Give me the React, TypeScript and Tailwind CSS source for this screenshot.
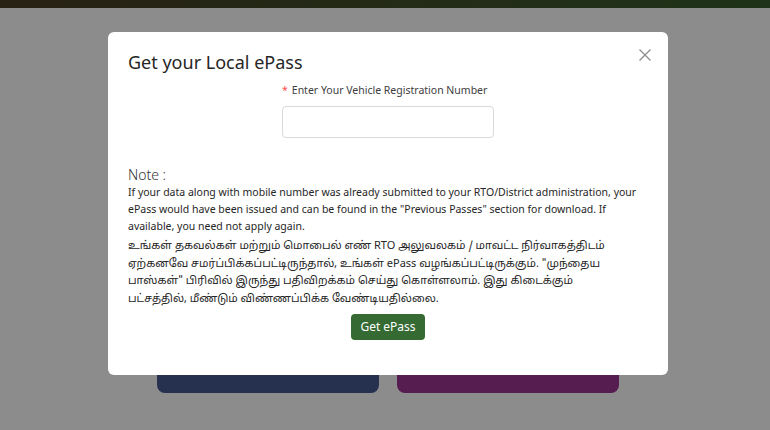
import React from "react";

const font = { fontFamily: '"Noto Sans", "Open Sans", Arial, sans-serif' };

export default function App() {
  return (
    <div className="relative w-full h-[430px] overflow-hidden bg-[#8c8c8c]" style={font}>
      {/* page behind the dimmed overlay */}
      <div className="h-[8px] bg-gradient-to-r from-[#272114] to-[#1e3319]" />
      <div className="flex justify-center gap-[18px] pt-[282px] pl-[6px]">
        <div className="w-[222px] h-[103px] rounded-lg bg-[#26304f]" />
        <div className="w-[222px] h-[103px] rounded-lg bg-[#561e50]" />
      </div>

      {/* modal */}
      <div className="absolute left-[108px] top-[32px] w-[560px] h-[343px] rounded-md bg-white px-5 pt-[16px] text-[#262626]">
        <div className="flex items-start justify-between">
          <h2 className="text-[18px] leading-[28px] text-[#262626]">Get your Local ePass</h2>
          <button className="mt-[0px] mr-[-4px] text-[#8c8c8c]">
            <svg width="14" height="14" viewBox="0 0 14 14" fill="none" stroke="currentColor" strokeWidth="1.3">
              <path d="M1.5 1.5l11 11M12.5 1.5l-11 11" />
            </svg>
          </button>
        </div>

        <div className="mt-[6px] flex justify-center">
          <div className="w-[212px]">
            <label className="block whitespace-nowrap text-[10.5px] leading-[16px] text-[#404040]">
              <span className="text-[#ff4d4f] mr-1">*</span>Enter Your Vehicle Registration Number
            </label>
            <input className="mt-[8px] block w-[212px] h-[32px] rounded border border-[#d9d9d9] bg-white outline-none" />
          </div>
        </div>

        <p className="mt-[28px] text-[14px] leading-[18px] font-light text-[#333]">Note :</p>
        <p className="text-[10.5px] leading-[17px] text-[#262626]">
          If your data along with mobile number was already submitted to your RTO/District administration, your ePass would have been issued and can be found in the "Previous Passes" section for download. If available, you need not apply again.
        </p>
        <p
          className="mt-[3px] text-[11px] leading-[17.5px] text-[#262626]"
          style={{ fontFamily: '"Noto Sans Tamil", "Lohit Tamil", "Noto Sans", sans-serif' }}
        >
          உங்கள் தகவல்கள் மற்றும் மொபைல் எண் RTO அலுவலகம் / மாவட்ட நிர்வாகத்திடம் ஏற்கனவே சமர்ப்பிக்கப்பட்டிருந்தால், உங்கள் ePass வழங்கப்பட்டிருக்கும். "முந்தைய பாஸ்கள்" பிரிவில் இருந்து பதிவிறக்கம் செய்து கொள்ளலாம். இது கிடைக்கும்
          <br />
          பட்சத்தில், மீண்டும் விண்ணப்பிக்க வேண்டியதில்லை.
        </p>
        <div className="mt-[6px] flex justify-center">
          <button className="h-[26px] w-[74px] rounded bg-[#356a33] text-[12px] text-white">Get ePass</button>
        </div>
      </div>
    </div>
  );
}
